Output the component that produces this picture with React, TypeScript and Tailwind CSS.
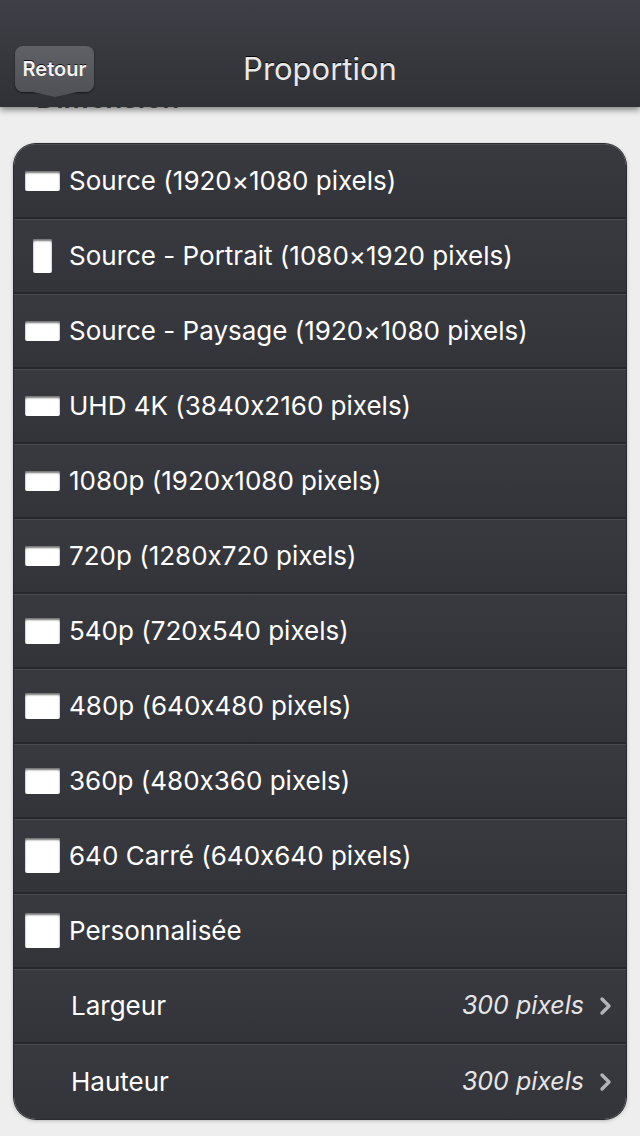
type Option = { label: string; icon: "wide" | "tall" | "std" | "square" }

const options: Option[] = [
  { label: "Source (1920×1080 pixels)", icon: "wide" },
  { label: "Source - Portrait (1080×1920 pixels)", icon: "tall" },
  { label: "Source - Paysage (1920×1080 pixels)", icon: "wide" },
  { label: "UHD 4K (3840x2160 pixels)", icon: "wide" },
  { label: "1080p (1920x1080 pixels)", icon: "wide" },
  { label: "720p (1280x720 pixels)", icon: "wide" },
  { label: "540p (720x540 pixels)", icon: "std" },
  { label: "480p (640x480 pixels)", icon: "std" },
  { label: "360p (480x360 pixels)", icon: "std" },
  { label: "640 Carré (640x640 pixels)", icon: "square" },
  { label: "Personnalisée", icon: "square" },
]

function RatioIcon({ kind }: { kind: Option["icon"] }) {
  const size =
    kind === "wide"
      ? "w-[35px] h-[20px]"
      : kind === "tall"
        ? "w-[19px] h-[34px]"
        : kind === "std"
          ? "w-[35px] h-[26px]"
          : "w-[35px] h-[35px]"
  return (
    <div className="w-[35px] flex justify-center">
      <div className={`${size} bg-white rounded-[2px] shadow-[inset_0_2px_2px_rgba(0,0,0,0.55)]`} />
    </div>
  )
}

function Row({ children, last }: { children: React.ReactNode; last?: boolean }) {
  return (
    <div
      className={`h-[75px] flex items-center bg-gradient-to-b from-[#393a3f] to-[#333439] ${
        last ? "" : "border-b-2 border-[#26272b]"
      } shadow-[inset_0_1px_0_#4a4b50]`}
    >
      {children}
    </div>
  )
}

function Chevron() {
  return (
    <svg width="13" height="20" viewBox="0 0 13 20" className="ml-[15px]">
      <path d="M3 3 L10 10 L3 17" fill="none" stroke="#b4b4b8" strokeWidth="3.4" strokeLinecap="round" strokeLinejoin="round" />
    </svg>
  )
}

export default function App() {
  return (
    <div className="w-[640px] h-[1136px] overflow-hidden bg-[#eeeeee] font-['Inter',sans-serif] [font-feature-settings:'calt'_0]">
      <header className="relative z-10 h-[107px] bg-gradient-to-b from-[#3f4047] to-[#303136] shadow-[0_3px_6px_rgba(0,0,0,0.45)] flex items-end pb-[15px] px-[15px]">
        <div className="relative w-[79px] h-[46px] rounded-[8px] bg-gradient-to-b from-[#606166] to-[#515257] shadow-[0_1px_2px_rgba(0,0,0,0.6)] flex items-center justify-center">
          <span className="text-[20px] font-semibold text-[#f2f2f2] [text-shadow:0_-1px_0_rgba(0,0,0,0.8)]">
            Retour
          </span>
          <div className="absolute left-1/2 -translate-x-1/2 bottom-[-5px] w-0 h-0 border-l-[22px] border-r-[22px] border-t-[5px] border-l-transparent border-r-transparent border-t-[#515257]" />
        </div>
        <div className="flex-1 text-center pr-[79px]">
          <span className="text-[31px] text-[#e9e9ea] [text-shadow:0_-1px_0_rgba(0,0,0,0.9)]">Proportion</span>
        </div>
      </header>

      <main className="-mt-[24px] px-[14px]">
        <div className="h-[30px] pl-[22px] text-[28px] font-semibold text-[#4a4a4a] leading-[30px]">Dimension</div>
        <div className="mt-[31px] rounded-[22px] overflow-hidden shadow-[0_0_0_1px_#2a2b2f,0_1px_4px_rgba(0,0,0,0.35)]">
          {options.map((o) => (
            <Row key={o.label}>
              <div className="pl-[11px] pr-[9px]">
                <RatioIcon kind={o.icon} />
              </div>
              <span className="text-[26px] text-white">{o.label}</span>
            </Row>
          ))}
          <Row>
            <span className="pl-[57px] text-[26px] text-white">Largeur</span>
            <div className="ml-auto pr-[14px] flex items-center">
              <span className="text-[25px] italic text-[#e6e6e6]">300 pixels</span>
              <Chevron />
            </div>
          </Row>
          <Row last>
            <span className="pl-[57px] text-[26px] text-white">Hauteur</span>
            <div className="ml-auto pr-[14px] flex items-center">
              <span className="text-[25px] italic text-[#e6e6e6]">300 pixels</span>
              <Chevron />
            </div>
          </Row>
        </div>
      </main>
    </div>
  )
}
